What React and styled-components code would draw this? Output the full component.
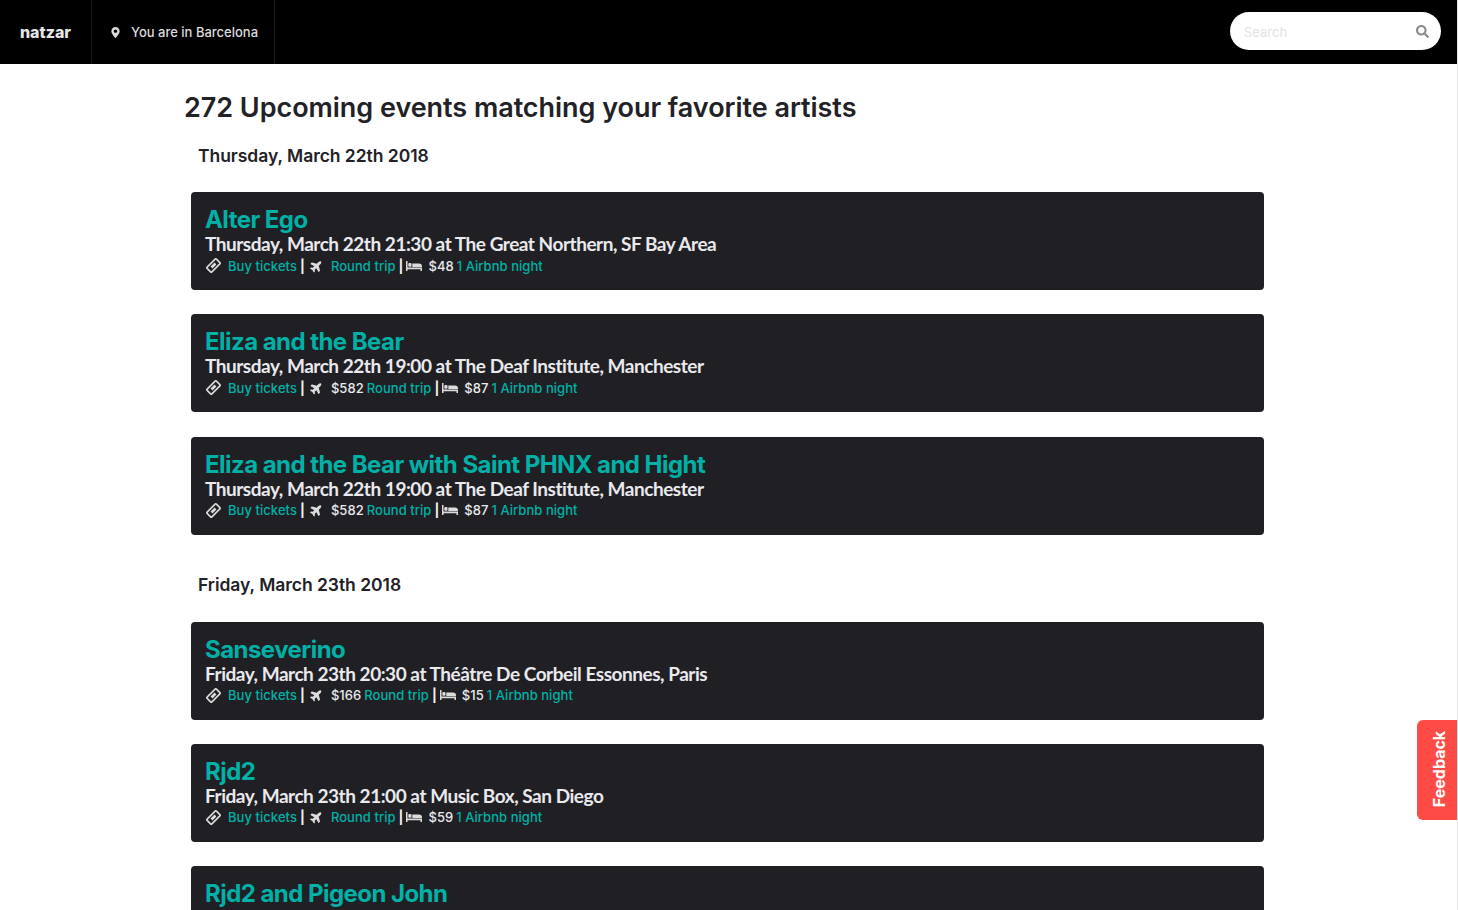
import React from 'react';
import styled, { createGlobalStyle } from 'styled-components';
import { FaMapMarkerAlt, FaPlane, FaSearch } from 'react-icons/fa';

const GlobalStyle = createGlobalStyle`
  html, body {
    margin: 0;
    padding: 0;
    height: 100%;
    overflow: hidden;
    background: #fff;
    font-family: Inter, "Liberation Sans", sans-serif;
  }
`;

const Page = styled.div`
  width: 1457px;
  height: 910px;
  overflow: hidden;
  border-right: 1px solid #e4e4e4;
`;

const Navbar = styled.header`
  height: 64px;
  background: #000;
  display: flex;
  align-items: stretch;
`;

const Brand = styled.div`
  width: 92px;
  display: flex;
  align-items: center;
  justify-content: center;
  box-sizing: border-box;
  color: #e6e6e6;
  font-size: 16px;
  font-weight: 800;
  border-right: 1px solid #1c1c1c;
`;

const Location = styled.div`
  width: 183px;
  box-sizing: border-box;
  display: flex;
  align-items: center;
  gap: 10px;
  padding-left: 18px;
  color: #dcdcdc;
  font-size: 13px;
  font-weight: 500;
  border-right: 1px solid #1c1c1c;
`;

const SearchBox = styled.div`
  margin: 12px 16px 14px auto;
  width: 211px;
  box-sizing: border-box;
  background: #fff;
  border-radius: 19px;
  display: flex;
  align-items: center;
  justify-content: space-between;
  padding: 1px 12px 0 14px;
  color: #e2e2e2;
  font-size: 13px;
  svg { color: #8a8a8a; }
`;

const Content = styled.main`
  padding: 27px 193px 0 184px;
`;

const Title = styled.h1`
  margin: 0;
  color: #222226;
  font-size: 27px;
  line-height: 34px;
  font-weight: 600;
  letter-spacing: -0.04px;
`;

const DateHeading = styled.h2`
  margin: ${(props) => (props.first ? '19px' : '38px')} 0 ${(props) => (props.first ? '24px' : '25px')} 14px;
  color: #222226;
  font-size: 17.5px;
  line-height: 24px;
  font-weight: 600;
  letter-spacing: -0.04px;
`;

const CardList = styled.div`
  margin-left: 7px;
  display: flex;
  flex-direction: column;
  gap: 24.3px;
`;

const Card = styled.article`
  height: 98px;
  box-sizing: border-box;
  background: #202024;
  border-radius: 4px;
  padding: 14px 14px 0;
`;

const EventName = styled.div`
  color: #00b1a7;
  font-size: 24px;
  line-height: 27px;
  font-weight: 700;
  letter-spacing: -0.55px;
`;

const EventInfo = styled.div`
  color: #e9e9ee;
  font-family: Lato, "Liberation Sans", sans-serif;
  font-size: 19px;
  line-height: 21px;
  font-weight: 700;
  letter-spacing: -0.47px;
`;

const Links = styled.div`
  display: flex;
  align-items: center;
  height: 23px;
  font-size: 13px;
  font-weight: 500;
  color: #e9e9ee;
  letter-spacing: 0.05px;
  white-space: pre;
`;

const LinkText = styled.span`
  color: #00b1a7;
`;

const Price = styled.span`
  margin-right: 3px;
`;

const IconSlot = styled.span`
  display: inline-flex;
  align-items: center;
  justify-content: center;
  width: ${(props) => props.width}px;
  margin-left: ${(props) => props.lead || 0}px;
  margin-right: ${(props) => props.gap}px;
  color: #dcdcdc;
  svg { transform: rotate(${(props) => props.rotate || 0}deg); }
`;

const Divider = styled.span`
  margin: 0 5px 0 3px;
  color: #f2f2f2;
  font-weight: 700;
`;

const FeedbackTab = styled.div`
  position: fixed;
  right: 1px;
  top: 720px;
  width: 40px;
  height: 100px;
  box-sizing: border-box;
  padding: 0 0 3px 4px;
  background: #ff4b46;
  border-radius: 6px 0 0 6px;
  color: #fff;
  font-size: 16px;
  font-weight: 700;
  display: flex;
  align-items: center;
  justify-content: center;
  span {
    display: block;
    transform: rotate(-90deg);
    white-space: nowrap;
  }
`;

const TicketIcon = () => (
  <svg width="15" height="15" viewBox="0 0 16 16">
    <g transform="rotate(-45 8 8)">
      <rect x="1" y="4.4" width="14" height="7.2" rx="1" fill="none" stroke="currentColor" strokeWidth="1.7" />
      <rect x="5" y="6.6" width="6" height="2.8" fill="currentColor" />
    </g>
  </svg>
);

const BedIcon = () => (
  <svg width="16" height="10" viewBox="0 0 16 10" fill="currentColor">
    <path d="M0 0h1.5v6.6H16V10h-1.5V8.2h-13V10H0z" />
    <rect x="2.3" y="2" width="3.2" height="3.8" rx="1" />
    <path d="M6.3 2.4h6.6A3.1 3.1 0 0 1 16 5.5v.4H6.3z" />
  </svg>
);

const days = [
  {
    date: 'Thursday, March 22th 2018',
    events: [
      { name: 'Alter Ego', info: 'Thursday, March 22th 21:30 at The Great Northern, SF Bay Area', flight: '', hotel: '$48' },
      { name: 'Eliza and the Bear', info: 'Thursday, March 22th 19:00 at The Deaf Institute, Manchester', flight: '$582', hotel: '$87' },
      { name: 'Eliza and the Bear with Saint PHNX and Hight', info: 'Thursday, March 22th 19:00 at The Deaf Institute, Manchester', flight: '$582', hotel: '$87' },
    ],
  },
  {
    date: 'Friday, March 23th 2018',
    events: [
      { name: 'Sanseverino', info: 'Friday, March 23th 20:30 at Théâtre De Corbeil Essonnes, Paris', flight: '$166', hotel: '$15' },
      { name: 'Rjd2', info: 'Friday, March 23th 21:00 at Music Box, San Diego', flight: '', hotel: '$59' },
      { name: 'Rjd2 and Pigeon John', info: 'Friday, March 23th 21:00 at Music Box, San Diego', flight: '', hotel: '$59' },
    ],
  },
];

const EventCard = ({ event }) => (
  <Card>
    <EventName>{event.name}</EventName>
    <EventInfo>{event.info}</EventInfo>
    <Links>
      <IconSlot width={16} gap={7}><TicketIcon /></IconSlot>
      <LinkText>Buy tickets</LinkText>
      <Divider>|</Divider>
      <IconSlot width={13} gap={8} rotate={-45}><FaPlane size={14} /></IconSlot>
      {event.flight && <Price>{event.flight}</Price>}
      <LinkText>Round trip</LinkText>
      <Divider>|</Divider>
      <IconSlot width={16} lead={-2} gap={6}><BedIcon /></IconSlot>
      <Price>{event.hotel}</Price>
      <LinkText>1 Airbnb night</LinkText>
    </Links>
  </Card>
);

const App = () => (
  <Page>
    <GlobalStyle />
    <Navbar>
      <Brand>natzar</Brand>
      <Location>
        <FaMapMarkerAlt size={11} />
        You are in Barcelona
      </Location>
      <SearchBox>
        Search
        <FaSearch size={13} />
      </SearchBox>
    </Navbar>
    <Content>
      <Title>272 Upcoming events matching your favorite artists</Title>
      {days.map((day, index) => (
        <section key={day.date}>
          <DateHeading first={index === 0}>{day.date}</DateHeading>
          <CardList>
            {day.events.map((event) => (
              <EventCard key={event.name} event={event} />
            ))}
          </CardList>
        </section>
      ))}
    </Content>
    <FeedbackTab><span>Feedback</span></FeedbackTab>
  </Page>
);

export default App;
